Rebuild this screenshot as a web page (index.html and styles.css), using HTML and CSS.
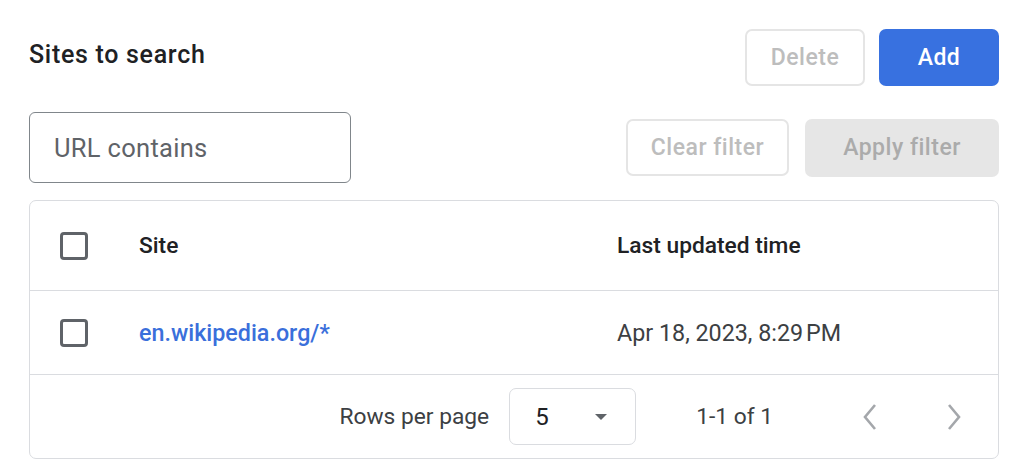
FILE: index.html
```html
<!DOCTYPE html>
<html lang="en">
<head>
<meta charset="utf-8">
<title>Sites to search</title>
<link rel="stylesheet" href="styles.css">
</head>
<body>
<div class="page">
  <div class="top-row">
    <h2 class="title">Sites to search</h2>
    <div class="actions">
      <button class="btn btn-outline" disabled>Delete</button>
      <button class="btn btn-primary">Add</button>
    </div>
  </div>
  <div class="filter-row">
    <div class="input"><span class="placeholder">URL contains</span></div>
    <div class="actions">
      <button class="btn btn-outline btn-wide" disabled>Clear filter</button>
      <button class="btn btn-filled btn-apply" disabled>Apply filter</button>
    </div>
  </div>
  <div class="card">
    <div class="row head">
      <div class="cell check"><span class="checkbox"></span></div>
      <div class="cell">Site</div>
      <div class="cell">Last updated time</div>
    </div>
    <div class="row body">
      <div class="cell check"><span class="checkbox"></span></div>
      <div class="cell link">en.wikipedia.org/*</div>
      <div class="cell date">Apr 18, 2023, 8:29&#8239;PM</div>
    </div>
    <div class="footer">
      <span class="rows-label">Rows per page</span>
      <div class="select"><span class="sel-val">5</span><span class="sel-arrow"></span></div>
      <span class="range">1-1 of 1</span>
      <span class="icon-btn prev"><svg width="18" height="28" viewBox="0 0 18 28"><polyline points="14,2 4,14 14,26" fill="none" stroke="#a4a7ab" stroke-width="2.6"/></svg></span>
      <span class="icon-btn next"><svg width="18" height="28" viewBox="0 0 18 28"><polyline points="4,2 14,14 4,26" fill="none" stroke="#a4a7ab" stroke-width="2.6"/></svg></span>
    </div>
  </div>
</div>
</body>
</html>
```

FILE: styles.css
```css
* { box-sizing: border-box; }
html, body { margin: 0; padding: 0; background: #fff; }
body { font-family: Roboto, "Noto Sans", Arial, sans-serif; color: #202124; }

.page { padding: 29px 33px 0 29px; }

.top-row { display: flex; justify-content: space-between; align-items: flex-start; }
.title { margin: 10px 0 0 0; font-size: 25px; line-height: 32px; font-weight: 500; letter-spacing: 0.7px; color: #202124; }

.actions { display: flex; gap: 14px; align-items: center; }

.btn {
  height: 57px; border-radius: 7px; font-family: Roboto, "Noto Sans", Arial, sans-serif;
  font-size: 23px; font-weight: 500; letter-spacing: 0.5px; padding: 0; cursor: default;
}
.btn-outline { width: 120px; background: #fff; border: 2px solid #e5e5e5; color: #bdbdbd; }
.btn-primary { width: 120px; background: #3871e0; border: none; color: #fff; }
.btn-wide { width: 163px; height: 57px; }
.btn-filled { background: #e6e6e6; border: none; color: #ababab; }
.btn-apply { width: 194px; height: 58px; }
.filter-row .actions { gap: 16px; }

.filter-row { display: flex; justify-content: space-between; align-items: center; margin-top: 26px; }
.input {
  width: 322px; height: 71px; border: 1px solid #80868b; border-radius: 6px;
  display: flex; align-items: center; padding-left: 24px;
}
.placeholder { font-size: 25.5px; letter-spacing: 0.3px; color: #5f6368; }

.card { margin-top: 17px; border: 1px solid #dadce0; border-radius: 7px; }
.row { display: grid; grid-template-columns: 109px 478px 1fr; align-items: center; border-bottom: 1px solid #dadce0; }
.row.head { height: 90px; font-size: 22.75px; font-weight: 500; color: #202124; }
.row.body { height: 84px; font-size: 23.3px; }
.cell.check { padding-left: 30px; display: flex; align-items: center; }
.checkbox { width: 28px; height: 28px; border: 3px solid #5f6368; border-radius: 4px; display: block; }
.link { color: #3a6fdb; font-weight: 500; }
.date { color: #3c4043; }

.footer { height: 83px; display: flex; align-items: center; justify-content: flex-end; font-size: 22.75px; color: #3c4043; padding-right: 34px; }
.rows-label { margin-right: 20px; }
.select {
  width: 127px; height: 57px; border: 1px solid #dadce0; border-radius: 7px;
  display: flex; align-items: center; justify-content: space-between; padding: 0 28px 0 25px;
}
.sel-val { font-size: 24px; color: #202124; }
.sel-arrow { width: 0; height: 0; border-left: 6.5px solid transparent; border-right: 6.5px solid transparent; border-top: 6.5px solid #5f6368; }
.range { margin-left: 60px; margin-right: 87px; }
.icon-btn { display: flex; align-items: center; justify-content: center; width: 20px; }
.icon-btn.prev { margin-right: 64px; }
```
